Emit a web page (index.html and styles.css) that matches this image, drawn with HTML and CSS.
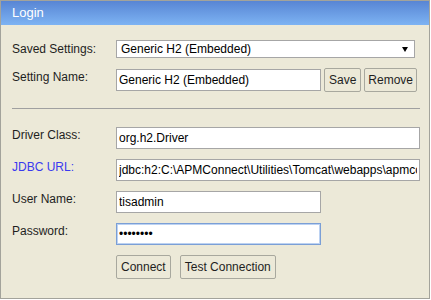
FILE: index.html
```html
<!DOCTYPE html>
<html lang="en">
<head>
    <meta charset="UTF-8">
    <title>Login</title>
    <link rel="stylesheet" href="styles.css">
</head>
<body>
<div class="panel">
    <div class="title">Login</div>
    <form class="form">
        <div class="row row-select">
            <label class="label">Saved Settings:</label>
            <div class="select-wrap">
                <select class="select">
                    <option>Generic H2 (Embedded)</option>
                </select>
                <span class="arrow"></span>
            </div>
        </div>
        <div class="row row-name">
            <label class="label">Setting Name:</label>
            <input class="field short" type="text" value="Generic H2 (Embedded)">
            <button type="button" class="btn save">Save</button>
            <button type="button" class="btn remove">Remove</button>
        </div>
        <div class="sep"></div>
        <div class="row">
            <label class="label">Driver Class:</label>
            <input class="field" type="text" value="org.h2.Driver">
        </div>
        <div class="row">
            <label class="label link">JDBC URL:</label>
            <input class="field" type="text" value="jdbc:h2:C:\APMConnect\Utilities\Tomcat\webapps\apmconnect\db\apmconnect">
        </div>
        <div class="row">
            <label class="label">User Name:</label>
            <input class="field short" type="text" value="tisadmin">
        </div>
        <div class="row">
            <label class="label">Password:</label>
            <input class="field short focused" type="password" value="password">
        </div>
        <div class="row actions">
            <button type="button" class="btn">Connect</button>
            <button type="button" class="btn">Test Connection</button>
        </div>
    </form>
</div>
</body>
</html>
```

FILE: styles.css
```css
body, html {
    margin: 0;
    padding: 0;
    background: #ffffff;
}
.panel {
    width: 430px;
    height: 299px;
    box-sizing: border-box;
    border: 1px solid #a3a39b;
    background-color: #ece9d8;
    font-family: "Liberation Sans", Arial, sans-serif;
    font-size: 12px;
    color: #1e1e1e;
}
.title {
    height: 24px;
    line-height: 23px;
    padding-left: 11px;
    color: #ffffff;
    font-size: 13px;
    background: linear-gradient(to bottom, #5885d4, #7db3f3);
}
.form {
    padding: 15px 9px 0 11px;
}
.row {
    display: flex;
    align-items: flex-start;
    margin-bottom: 10px;
}
.label {
    width: 104px;
    flex: none;
    line-height: 14px;
    padding-top: 1px;
}
.link {
    color: #3a3aef;
}
.row-select .label {
    padding-top: 2px;
}
.select-wrap {
    position: relative;
    width: 299px;
}
.select {
    -webkit-appearance: none;
    appearance: none;
    display: block;
    width: 100%;
    height: 18px;
    margin: 0;
    padding: 0 0 0 4px;
    border: 1px solid #a6a6a6;
    border-radius: 0;
    background: #ffffff;
    font-family: inherit;
    font-size: 12px;
    color: #000000;
}
.arrow {
    position: absolute;
    right: 7px;
    top: 7px;
    width: 0;
    height: 0;
    border-left: 3.5px solid transparent;
    border-right: 3.5px solid transparent;
    border-top: 5px solid #000000;
}
.row-name {
    align-items: center;
}
.row-name .label {
    align-self: flex-start;
    padding-top: 2px;
}
.field {
    flex: 1;
    height: 22px;
    box-sizing: border-box;
    margin: 0;
    padding: 0 2px;
    border: 1px solid #a6a6a6;
    background: #ffffff;
    font-family: inherit;
    font-size: 12px;
    color: #000000;
    outline: none;
}
.short {
    flex: none;
    width: 205px;
}
.focused {
    border-color: #7b9fd6;
    box-shadow: inset 0 0 0 1px #bcd2f2;
}
.btn {
    height: 24px;
    margin: 0 0 0 3px;
    padding: 0 4px;
    border: 1px solid #a8a89e;
    border-radius: 2px;
    background: #ece9d8;
    font-family: inherit;
    font-size: 12px;
    color: #1e1e1e;
}
.btn.remove {
    padding: 0 3px;
}
.sep {
    height: 1px;
    background: #a0a0a0;
    margin: 16px 0 18px 0;
}
.actions {
    padding-left: 104px;
    gap: 9px;
}
.actions .btn {
    margin: 0;
}
```
